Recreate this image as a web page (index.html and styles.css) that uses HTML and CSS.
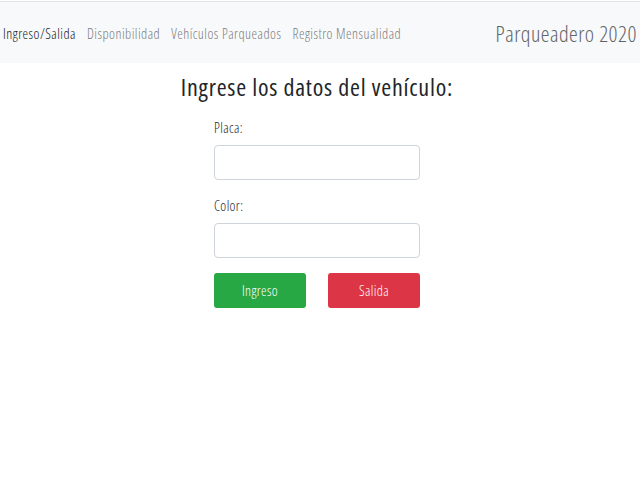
FILE: index.html
```html
<!DOCTYPE html>
<html lang="es">
<head>
<meta charset="utf-8">
<title>Parqueadero 2020</title>
<link rel="stylesheet" href="styles.css">
</head>
<body>
<nav class="navbar">
  <ul class="nav-links">
    <li><a class="nav-link active" href="#">Ingreso/Salida</a></li>
    <li><a class="nav-link" href="#">Disponibilidad</a></li>
    <li><a class="nav-link" href="#">Vehículos Parqueados</a></li>
    <li><a class="nav-link" href="#">Registro Mensualidad</a></li>
  </ul>
  <span class="brand">Parqueadero 2020</span>
</nav>
<main class="content">
  <h1 class="title">Ingrese los datos del vehículo:</h1>
  <form class="form">
    <label class="label" for="placa">Placa:</label>
    <input class="input" id="placa" type="text">
    <label class="label" for="color">Color:</label>
    <input class="input" id="color" type="text">
    <div class="buttons">
      <button type="button" class="btn btn-green">Ingreso</button>
      <button type="button" class="btn btn-red">Salida</button>
    </div>
  </form>
</main>
</body>
</html>
```
FILE: styles.css
```css
* { box-sizing: border-box; }
body {
  margin: 0;
  font-family: "Open Sans", "Noto Sans", sans-serif;
  font-stretch: 75%;
  font-weight: 300;
  color: #212529;
  background: #fff;
}
.navbar {
  margin-top: 1px;
  border-top: 1px solid #e3e5e7;
  background: #f8f9fa;
  height: 62px;
  display: flex;
  align-items: center;
  justify-content: space-between;
  padding: 0 3px 0 3px;
}
.nav-links {
  list-style: none;
  margin: 0;
  padding: 0;
  display: flex;
  gap: 11px;
}
.nav-link {
  font-size: 14px;
  letter-spacing: 0.5px;
  color: #7b7d7f;
  text-decoration: none;
}
.nav-link.active { color: #15181b; }
.brand {
  font-size: 22px;
  letter-spacing: 0.5px;
  color: #616467;
}
.content {
  display: flex;
  flex-direction: column;
  align-items: center;
  padding-right: 6px;
}
.title {
  margin: 9px 0 0;
  font-size: 24px;
  font-weight: 400;
  letter-spacing: 0.8px;
  line-height: 30px;
  color: #212529;
}
.form {
  width: 206px;
  margin-top: 16px;
  display: flex;
  flex-direction: column;
}
.label {
  font-size: 14px;
  letter-spacing: 0.4px;
  line-height: 20px;
  margin-bottom: 7px;
}
.input {
  height: 35px;
  border: 1px solid #ced4da;
  border-radius: 4px;
  margin-bottom: 16px;
  font-family: inherit;
}
.buttons {
  display: flex;
  justify-content: space-between;
  margin-top: -1px;
}
.btn {
  width: 92px;
  height: 35px;
  border: none;
  border-radius: 3px;
  color: #fff;
  font-family: inherit;
  font-stretch: 75%;
  font-weight: 300;
  letter-spacing: 0.4px;
  font-size: 14px;
}
.btn-green { background: #28a745; }
.btn-red { background: #dc3545; }
```
